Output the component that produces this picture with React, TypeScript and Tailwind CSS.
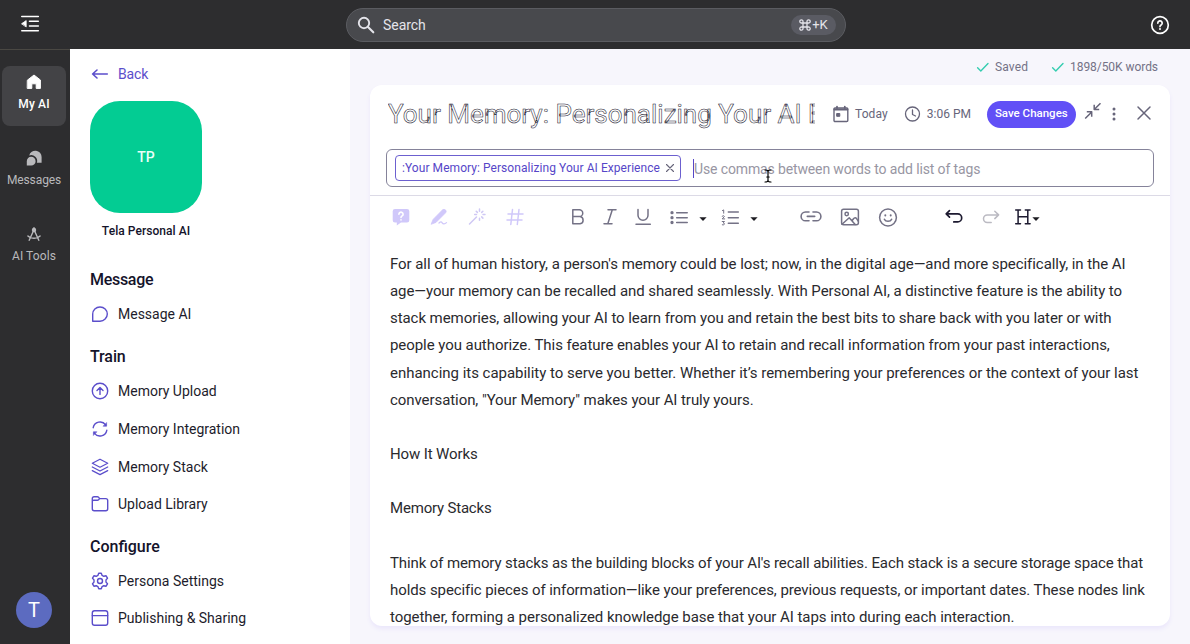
import type { ReactNode } from "react";

type SvgProps = { w?: number; h?: number; className?: string; sw?: number; children: ReactNode };

function Svg({ w = 20, h = 20, className = "", sw = 1.5, children }: SvgProps) {
  return (
    <svg
      width={w}
      height={h}
      viewBox={`0 0 ${w} ${h}`}
      fill="none"
      stroke="currentColor"
      strokeWidth={sw}
      strokeLinecap="round"
      strokeLinejoin="round"
      className={`block shrink-0 ${className}`}
    >
      {children}
    </svg>
  );
}

function Header() {
  return (
    <header className="flex h-[49px] shrink-0 items-center bg-[#2d2d2f] text-white">
      <Svg w={20} h={20} sw={1.6} className="ml-5 -mt-0.5">
        <path d="M1.800 2.500h16.500M9.500 7.300h8.800M9.500 12h8.800M1.800 16.800h16.500" />
        <path d="M1.800 9.600 6.200 6.600v6z" fill="currentColor" strokeWidth={0.8} />
      </Svg>
      <div className="ml-[306px] flex h-[34px] w-[500px] items-center rounded-full border border-[#5b5c61] bg-[#48494d] pr-[9px] pl-2.5 text-[#e4e4ea]">
        <Svg w={18} h={18} sw={1.9}>
          <circle cx="7" cy="7" r="5.2" />
          <path d="m11 11 5.3 5.3" strokeWidth={2.1} />
        </Svg>
        <span className="ml-2 text-sm tracking-[-0.05px]">Search</span>
        <span className="ml-auto flex h-5 w-[45px] items-center justify-center rounded-full bg-[#5a5b63] text-[13px]">
          <Svg w={12} h={12} sw={1.3} className="mr-px">
            <path d="M4 4h4v4H4zM4 4H2.6A1.6 1.6 0 1 1 4 2.6zM8 4V2.6A1.6 1.6 0 1 1 9.4 4zM8 8h1.4A1.6 1.6 0 1 1 8 9.4zM4 8v1.4A1.6 1.6 0 1 1 2.6 8z" />
          </Svg>
          +K
        </span>
      </div>
      <Svg w={20} h={20} sw={1.7} className="mr-5 ml-auto">
        <circle cx="10" cy="10" r="8.3" />
        <path d="M7.8 8.1a2.2 2.2 0 1 1 3.3 1.9c-.8.5-1.1.8-1.1 1.6" />
        <path d="M10 14v.1" strokeWidth={2} />
      </Svg>
    </header>
  );
}

function Rail() {
  return (
    <nav className="flex w-[70px] shrink-0 flex-col border-t border-[#4a4843] bg-[#2d2d2f] pl-0.5 text-xs text-[#b9b9bc]">
      <div className="mt-4 flex h-[60px] w-16 flex-col items-center rounded-lg bg-[#434346] pt-1.5 font-medium text-white">
        <Svg w={20} h={20} sw={1}>
          <path d="M3.6 8 10 3l6.4 5v8.4h-4.2v-4.6H7.8v4.6H3.6z" fill="currentColor" />
        </Svg>
        <span className="mt-1 tracking-[0.15px]">My AI</span>
      </div>
      <div className="mt-[22px] flex w-16 flex-col items-center">
        <Svg w={20} h={20} sw={0}>
          <path d="M2.8 17.6v-4.4a4.4 4.4 0 1 1 4.4 4.4z" fill="currentColor" />
          <path d="M5.2 7.4A6.3 6.3 0 0 1 17.6 9v5.8h-4.7A6 6 0 0 0 5.2 7.4" fill="currentColor" />
        </Svg>
        <span className="mt-1 tracking-[-0.1px]">Messages</span>
      </div>
      <div className="mt-9 flex w-16 flex-col items-center">
        <Svg w={20} h={20} sw={1.4}>
          <circle cx="10" cy="6" r="1.500" fill="currentColor" />
          <path d="M10 3.800v1M9.300 7.200 5.200 16.300M10.700 7.200l4.100 9.100M3.900 12c1.300 1.500 3.600 2.200 6.100 2.200s4.800-.7 6.100-2.200" />
        </Svg>
        <span className="mt-1 tracking-[0.1px]">AI Tools</span>
      </div>
      <div className="mt-auto mb-4 ml-3.5 flex size-9 items-center justify-center rounded-full bg-[#5c6bc0] text-[20px] text-white">
        T
      </div>
    </nav>
  );
}

function Item({ icon, children, className = "" }: { icon: ReactNode; children: ReactNode; className?: string }) {
  return (
    <div className={`flex h-[37.6px] items-center text-sm text-[#1d1c2b] ${className}`}>
      <Svg className="text-[#5b4ecb]" sw={1.4}>{icon}</Svg>
      <span className="ml-2">{children}</span>
    </div>
  );
}

function Heading({ children, className = "" }: { children: ReactNode; className?: string }) {
  return <h2 className={`text-base leading-5 font-medium text-[#14132a] ${className}`}>{children}</h2>;
}

function Sidebar() {
  return (
    <aside className="flex w-[280px] shrink-0 flex-col bg-white pl-5">
      <div className="mt-[15px] flex h-5 items-center text-sm tracking-[-0.15px] text-[#5b4ecb]">
        <Svg sw={1.6}>
          <path d="M17.3 10H2.6M7 6 2.600 10 7 14" />
        </Svg>
        <span className="ml-2">Back</span>
      </div>
      <div className="mt-[16.5px] flex size-28 items-center justify-center rounded-[30px] bg-[#03cc93] pt-px text-sm font-medium text-[#e9fff8]">
        TP
      </div>
      <div className="mt-[10.500px] w-28 text-center text-xs leading-4 font-medium tracking-[0.05px] text-[#14132a]">Tela Personal AI</div>
      <Heading className="mt-[31px] tracking-[-0.3px]">Message</Heading>
      <Item className="mt-[5px]" icon={<path d="M2.7 17.2v-7.1a7.3 7.1 0 1 1 7.3 7.1z" />}>Message AI</Item>
      <Heading className="mt-[14px] tracking-[-0.1px]">Train</Heading>
      <Item
        className="mt-1.5"
        icon={
          <>
            <circle cx="10" cy="10" r="7.7" />
            <path d="M10 13.4V6.8M7 9.5l3-2.9 3 2.9" />
          </>
        }
      >
        Memory Upload
      </Item>
      <Item
        icon={
          <>
            <path d="M3.2 8.7A7 7 0 0 1 15.7 5.8M16.8 11.3A7 7 0 0 1 4.3 14.2" />
            <path d="M16.6 3.900v3.300h-3.200zM3.400 16.100v-3.300h3.200z" fill="currentColor" strokeWidth={0.6} />
          </>
        }
      >
        Memory Integration
      </Item>
      <Item
        icon={<path d="m10 2.2 7.7 4-7.7 4-7.7-4zM2.3 10l7.7 4 7.7-4M2.3 13.6l7.7 4 7.7-4" strokeWidth={1.25} />}
      >
        Memory Stack
      </Item>
      <Item
        icon={
          <path d="M2.3 7.2V4.5c0-1 .8-1.8 1.8-1.8h3.2c.6 0 1 .2 1.4.7l.9 1.2h6.2c1 0 1.9.8 1.9 1.9v8.3c0 1-.9 1.9-1.9 1.9H4.2c-1 0-1.9-.9-1.9-1.9zq0-1 1.4-1h3.8c.8 0 1.2-.2 2.1-1.6" />
        }
      >
        Upload Library
      </Item>
      <Heading className="mt-[14px]">Configure</Heading>
      <Item
        className="mt-[5px]"
        icon={
          <>
            <path d="M8.700 2.300h2.600l.8 2.100 1.700.9 2.300-.5 1.400 2.400-1.500 1.700v2.200l1.500 1.700-1.400 2.400-2.300-.5-1.700.9-.8 2.100H8.700l-.8-2.100-1.700-.9-2.300.5-1.400-2.400L4 11.100V8.900L2.500 7.200l1.400-2.400 2.300.5 1.700-.9z" />
            <circle cx="10" cy="10" r="2.5" />
          </>
        }
      >
        Persona Settings
      </Item>
      <Item
        icon={
          <>
            <rect x="2.3" y="2.8" width="15.4" height="14.4" rx="2.2" />
            <path d="M2.3 7.6h15.4" />
          </>
        }
      >
        Publishing &amp; Sharing
      </Item>
    </aside>
  );
}

function Caret({ className }: { className: string }) {
  return (
    <Svg w={8} h={20} sw={0} className={`text-[#1d1c22] ${className}`}>
      <path d="M.4 10.2h7.2L4 14z" fill="currentColor" />
    </Svg>
  );
}

function Toolbar() {
  return (
    <div className="flex h-[42px] shrink-0 items-center border-t border-[#dcdae6] pl-[22px] text-[#747286]">
      <Svg w={18} className="text-[#d0c8fa]" sw={0}>
        <path d="M3 2h12a2.3 2.3 0 0 1 2.3 2.3v9A2.3 2.3 0 0 1 15 15.600H9L4.800 18.600V15.600H3A2.300 2.300 0 0 1 .7 13.300v-9A2.300 2.300 0 0 1 3 2" fill="currentColor" />
        <path d="M6.900 7.200a2.100 2 0 1 1 3.200 1.700c-.8.5-1.100.8-1.100 1.500M9 12.800v.1" stroke="#fff" strokeWidth={1.6} />
      </Svg>
      <Svg w={18} className="ml-5 text-[#d0c8fa]" sw={1.3}>
        <path d="m12.600 2.800-9.500 9.600-2 4.900 4.900-1.900 9.600-9.600q1.200-1.400 0-2.800-1.500-1.500-3-.2" fill="currentColor" strokeWidth={0.8} />
        <path d="M9 16c1.700-1.500 2.500-1.200 3.200-.2s2.300 1.700 4.300-.2" />
      </Svg>
      <Svg w={18} className="ml-5 text-[#cfc8f4]" sw={1.5}>
        <path d="m1.500 17 7-7M11.500 2v2.200M11.500 11.300v2M6.700 7.500h1.800M15 7.500h2M8.200 4.200l1.200 1.200M14.900 4.200l-1.200 1.200M13.700 9.900l1.200 1.200" />
      </Svg>
      <Svg w={18} className="ml-5 text-[#d0c8fa]" sw={1.5}>
        <path d="M6.500 2.500 4.800 17.500M13 2.500l-1.700 15M2 7h15M1 13h15" />
      </Svg>
      <Svg className="ml-11">
        <path d="M4.800 2.700h6.500a3.400 3.400 0 0 1 0 6.900H4.800zM4.800 9.600h7.300a3.600 3.600 0 0 1 0 7.100H4.800z" />
      </Svg>
      <Svg className="ml-3">
        <path d="M8 2.700h8M4 16.700h8M12.300 2.700 7.800 16.700" />
      </Svg>
      <Svg className="ml-[13px]">
        <path d="M5 2.500v5.800a5 5 0 0 0 10 0V2.500M3 17.200h14.300" />
      </Svg>
      <Svg className="ml-4" sw={1.6}>
        <path d="M7.700 5.700h10.500M7.700 10.700h10.500M7.700 15.500h10.500" />
        <path d="M3 5.700h.01M3 10.700h.01M3 15.500h.01" strokeWidth={3.300} />
      </Svg>
      <Caret className="ml-[10px]" />
      <Svg className="ml-[13px]" sw={1.500}>
        <path d="M8.300 5h10M8.300 10.700h10M8.300 16.300h10" />
        <path d="m2.400 3.600 1.300-.7v3.300M2.200 9.200q2.200-1.200 2.200.3L2.200 11.900h2.500M2.200 14.500h2.300l-1.300 1.400c2.200.2 1.400 2.800-.9 1.900" strokeWidth={1} />
      </Svg>
      <Caret className="ml-[10px]" />
      <Svg w={22} className="ml-[42px]" sw={1.600}>
        <path d="M9 5H5.500a4.400 4.400 0 0 0 0 8.800H9M13 5h3.500a4.400 4.400 0 0 1 0 8.800H13M7.300 9.400h7.400" />
      </Svg>
      <Svg className="ml-[18px]">
        <rect x="1.600" y="2.200" width="16.800" height="15.600" rx="2" />
        <circle cx="6.700" cy="7" r="1.700" />
        <path d="m2 17.300 7.200-6.500 6 6.700M12 13.800l1.300-1.800c1.200-1.700 2.600-1.400 3.300-.3l1.600 2.500" />
      </Svg>
      <Svg className="ml-[18px]">
        <circle cx="10" cy="10.500" r="8.400" />
        <path d="M6.400 12.300c1.300 2.700 5.900 2.700 7.200 0" />
        <path d="M7.300 8.100v.4M12.700 8.100v.4" strokeWidth={1.900} />
      </Svg>
      <Svg className="ml-[46px] text-[#1d1a30]" sw={1.700}>
        <path d="M5.500 3.700 2.200 6.900l3.300 3.200M2.500 6.900h11.200a4 4 0 0 1 0 8H9.800" />
      </Svg>
      <Svg className="ml-[17px] text-[#bbbac2]" sw={1.500}>
        <path d="m13.800 4.200 3.800 3.700-3.800 3.700M17.500 7.900H6.300a3.800 3.800 0 0 0 0 7.600h3.900" />
      </Svg>
      <Svg className="ml-3 text-[#1d1a30]" sw={1.500}>
        <path d="M2.700 2.900h4.800M12.300 2.900h4.800M2.700 16.700h4.800M12.300 16.700h4.800M5.100 2.900v13.800M14.800 2.900v13.800M5.100 9.700h9.700" />
      </Svg>
      <Caret className="-ml-px" />
    </div>
  );
}

function Body() {
  return (
    <div className="flex flex-col pt-[13.700px] pl-5 text-[15px] leading-[27.2px] whitespace-pre text-[#2a2a2e]">
      <p className="tracking-[-0.059px]">For all of human history, a person's memory could be lost; now, in the digital age—and more specifically, in the AI</p>
      <p className="tracking-[-0.071px]">age—your memory can be recalled and shared seamlessly. With Personal AI, a distinctive feature is the ability to</p>
      <p className="tracking-[-0.063px]">stack memories, allowing your AI to learn from you and retain the best bits to share back with you later or with</p>
      <p className="tracking-[-0.059px]">people you authorize. This feature enables your AI to retain and recall information from your past interactions,</p>
      <p className="tracking-[-0.022px]">enhancing its capability to serve you better. Whether it’s remembering your preferences or the context of your last</p>
      <p className="tracking-[-0.069px]">conversation, "Your Memory" makes your AI truly yours.</p>
      <p className="mt-[27.2px] tracking-[-0.127px]">How It Works</p>
      <p className="mt-[27.2px] tracking-[-0.189px]">Memory Stacks</p>
      <p className="mt-[27.2px] tracking-[-0.11px]">Think of memory stacks as the building blocks of your AI's recall abilities. Each stack is a secure storage space that</p>
      <p className="tracking-[-0.08px]">holds specific pieces of information—like your preferences, previous requests, or important dates. These nodes link</p>
      <p className="tracking-[-0.051px]">together, forming a personalized knowledge base that your AI taps into during each interaction.</p>
    </div>
  );
}

function Check({ className = "" }: { className?: string }) {
  return (
    <Svg w={14} h={14} sw={1.4} className={`text-[#35cdb0] ${className}`}>
      <path d="m1.600 7.800 3.200 3.200 7.200-7.600" />
    </Svg>
  );
}

function Editor() {
  return (
    <main className="flex min-w-0 grow flex-col bg-[#f7f6fc] pr-5 pl-5">
      <div className="flex h-9 items-center justify-end pr-3 text-xs text-[#747286]">
        <Check />
        <span className="ml-[5px] tracking-[0.1px]">Saved</span>
        <Check className="ml-[23px]" />
        <span className="ml-[5px] tracking-[-0.05px]">1898/50K words</span>
      </div>
      <section className="flex h-[541px] shrink-0 flex-col overflow-hidden rounded-xl bg-white shadow-[0_3px_4px_#ebe7fb]">
        <div className="flex h-[58px] shrink-0 items-center pl-[18px] text-xs text-[#67657a]">
          <h1 className="w-[427px] shrink-0 overflow-hidden text-[26px] leading-[34px] whitespace-pre text-white [-webkit-text-stroke:0.55px_#15142b]">
            Your Memory: Personalizing Your AI E
          </h1>
          <Svg w={18} h={18} sw={1.4} className="ml-[17px]">
            <rect x="2" y="3" width="13.800" height="13.500" rx="1" />
            <path d="M2.500 4.500h12.800" strokeWidth={2.200} />
            <path d="M5 1.700V3M12.800 1.700V3" strokeWidth={1.800} />
            <rect x="5" y="8.500" width="2.800" height="2.800" fill="currentColor" strokeWidth={1} />
          </Svg>
          <span className="ml-[5px] tracking-[0.1px]">Today</span>
          <Svg w={18} h={18} sw={1.300} className="ml-4">
            <circle cx="8.500" cy="9" r="7" />
            <path d="M8.500 5v4.500l3 1.500" />
          </Svg>
          <span className="ml-[5px] w-[45px] whitespace-nowrap">3:06 PM</span>
          <button className="ml-[15px] h-[27px] w-[89px] shrink-0 rounded-full bg-[#6150f6] text-[11.5px] font-medium whitespace-nowrap text-white">Save Changes</button>
          <Svg w={18} h={18} sw={1.500} className="-mt-1.5 ml-2">
            <path d="m1.200 16.500 6.300-6.300M2.800 9.800h4.900v5M16.500 1.200l-6.300 6.300M10.200 2.700v4.900h5" strokeLinecap="butt" />
          </Svg>
          <Svg w={6} h={18} sw={3} className="ml-[9px]">
            <path d="M3 4h.01M3 9h.01M3 14h.01" />
          </Svg>
          <Svg w={18} h={18} className="-mt-[3px] ml-[18px]" sw={1.500}>
            <path d="m3 3 12 12M15 3 3 15" />
          </Svg>
        </div>
        <div className="relative mt-[6px] mr-4 ml-4 flex h-[38px] shrink-0 items-center rounded-md border border-[#85839a] pl-2">
          <span className="flex h-[26px] w-[286px] items-center rounded border border-[#6c60cf] pl-1.5 text-xs tracking-[0.06px] whitespace-nowrap text-[#5646c8]">
            :Your Memory: Personalizing Your AI Experience
            <Svg w={10} h={10} sw={1.100} className="ml-[5px] text-[#67657a]">
              <path d="m1.500 1.500 7 7M8.500 1.500l-7 7" />
            </Svg>
          </span>
          <span className="ml-3 h-[19px] w-px bg-[#5646c8]" />
          <span className="pt-px text-sm tracking-[-0.13px] text-[#9896a3]">Use commas between words to add list of tags</span>
          <Svg w={8} h={14} sw={1.200} className="absolute top-[19px] left-[377px] text-black">
            <path d="M1 1c1.500 0 3 .3 3 1.500v9C4 12.700 2.500 13 1 13M7 1C5.500 1 4 1.300 4 2.500M7 13c-1.500 0-3-.3-3-1.500M2.800 8h2.400" />
          </Svg>
        </div>
        <div className="mt-2 flex flex-col">
          <Toolbar />
          <Body />
        </div>
      </section>
    </main>
  );
}

export default function App() {
  return (
    <div className="flex h-[644px] w-[1190px] flex-col overflow-hidden bg-white font-[Roboto,sans-serif]">
      <Header />
      <div className="flex min-h-0 grow">
        <Rail />
        <Sidebar />
        <Editor />
      </div>
    </div>
  );
}
